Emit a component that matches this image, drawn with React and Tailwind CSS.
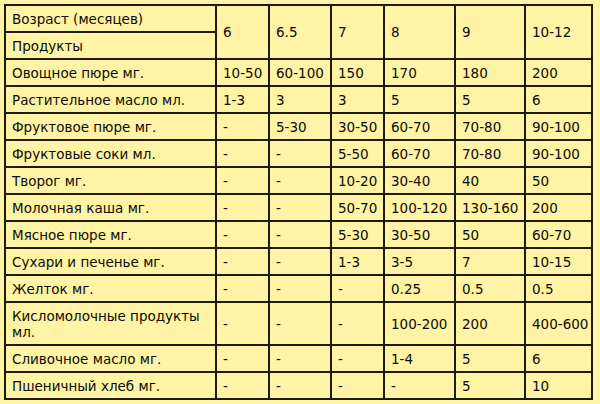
import React from "react";

const rows = [
  ["Овощное пюре мг.", "10-50", "60-100", "150", "170", "180", "200"],
  ["Растительное масло мл.", "1-3", "3", "3", "5", "5", "6"],
  ["Фруктовое пюре мг.", "-", "5-30", "30-50", "60-70", "70-80", "90-100"],
  ["Фруктовые соки мл.", "-", "-", "5-50", "60-70", "70-80", "90-100"],
  ["Творог мг.", "-", "-", "10-20", "30-40", "40", "50"],
  ["Молочная каша мг.", "-", "-", "50-70", "100-120", "130-160", "200"],
  ["Мясное пюре мг.", "-", "-", "5-30", "30-50", "50", "60-70"],
  ["Сухари и печенье мг.", "-", "-", "1-3", "3-5", "7", "10-15"],
  ["Желток мг.", "-", "-", "-", "0.25", "0.5", "0.5"],
  ["Кисломолочные продукты мл.", "-", "-", "-", "100-200", "200", "400-600"],
  ["Сливочное масло мг.", "-", "-", "-", "1-4", "5", "6"],
  ["Пшеничный хлеб мг.", "-", "-", "-", "-", "5", "10"],
];

const ages = ["6", "6.5", "7", "8", "9", "10-12"];
const widths = ["w-[211px]", "w-[53px]", "w-[62px]", "w-[53px]", "w-[71px]", "w-[70px]", "w-[67px]"];

// plain 2px dark grid, text centred vertically like the original html table
const cell = "border-2 border-[#1e1b0a] pl-[6px] pr-[2px] align-middle leading-[16px] whitespace-nowrap";
const wrapCell = "border-2 border-[#1e1b0a] pl-[6px] pr-[2px] align-middle leading-[16px]";

export default function App() {
  return (
    <div className="w-[600px] h-[404px] bg-[#fff3a6] pt-[4px] pl-[4px] font-['DejaVu_Sans',Verdana,sans-serif] text-[13.5px] text-[#0e0c02]">
      <table className="border-collapse table-fixed w-[588px]">
        <colgroup>
          {widths.map((w, i) => (
            <col key={i} className={w} />
          ))}
        </colgroup>
        <tbody>
          <tr className="h-[27px]">
            <td className={cell}>Возраст (месяцев)</td>
            {ages.map((a) => (
              <td key={a} rowSpan={2} className={cell}>
                {a}
              </td>
            ))}
          </tr>
          <tr className="h-[27px]">
            <td className={cell}>Продукты</td>
          </tr>
          {rows.map((r) => (
            <tr key={r[0]} className={r[0].length > 24 ? "h-[43px]" : "h-[27px]"}>
              {r.map((c, i) => (
                <td key={i} className={i === 0 ? wrapCell : cell}>
                  {c}
                </td>
              ))}
            </tr>
          ))}
        </tbody>
      </table>
    </div>
  );
}
